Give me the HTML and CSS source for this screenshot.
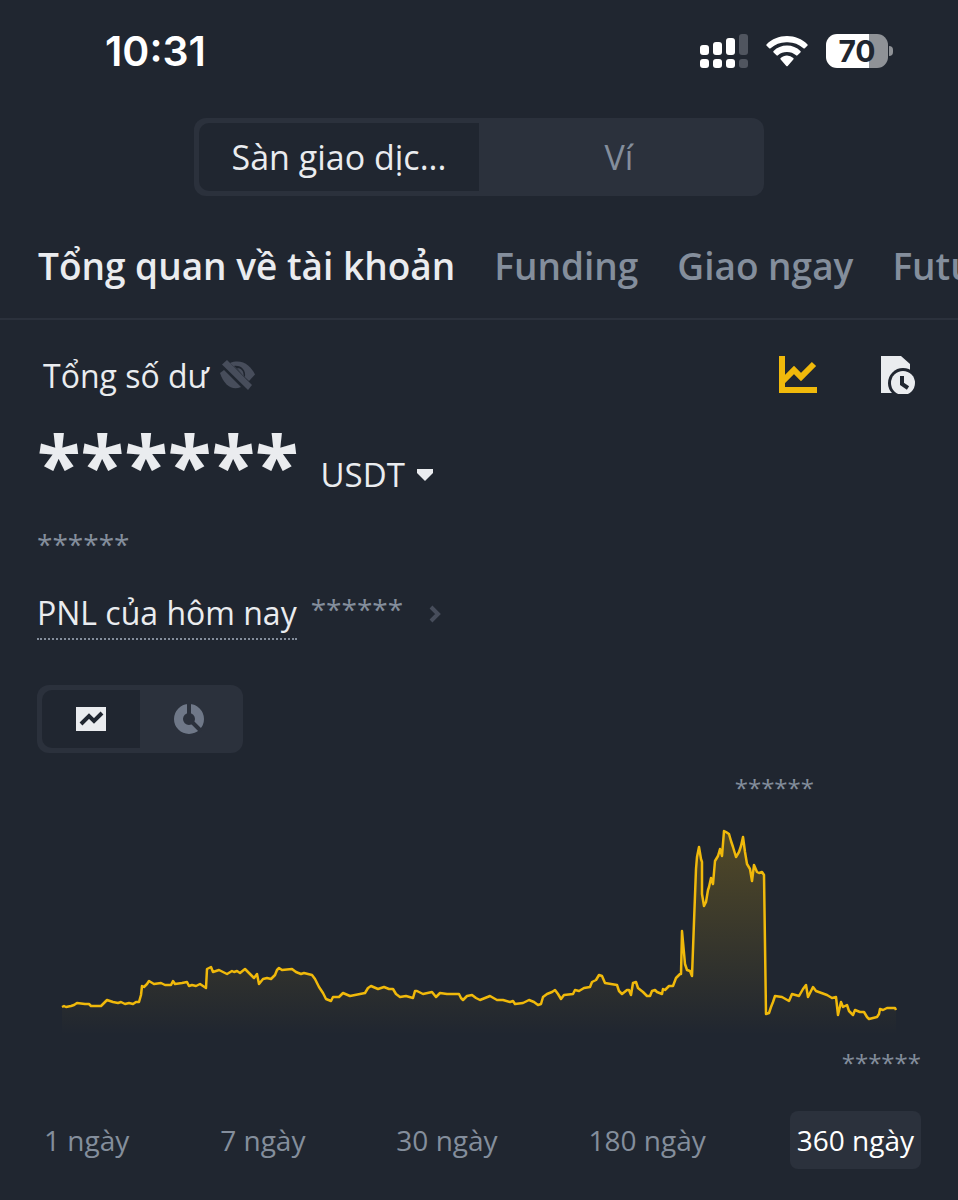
FILE: index.html
```
<!DOCTYPE html>
<html lang="vi">
  <head>
    <meta charset="UTF-8" />
    <meta name="viewport" content="width=device-width, initial-scale=1.0" />
    <title>Tổng quan về tài khoản</title>
    <link rel="stylesheet" href="styles.css">
  </head>
  <body>
    <div class="status-bar">
      <span class="time">10:31</span>
      <div class="status-icons">
        <svg class="signal" width="48" height="34" viewBox="0 0 48 34">
          <g fill="#fff">
            <rect x="0" y="11" width="9" height="10" rx="3" />
            <rect x="13" y="8" width="9" height="13" rx="3" />
            <rect x="26" y="4" width="9" height="17" rx="3" />
            <rect x="0" y="25" width="9" height="9" rx="3" />
            <rect x="13" y="25" width="9" height="9" rx="3" />
            <rect x="26" y="25" width="9" height="9" rx="3" />
          </g>
          <g fill="#50555f">
            <rect x="39" y="0" width="9" height="21" rx="3" />
            <rect x="39" y="25" width="9" height="9" rx="3" />
          </g>
        </svg>
        <svg class="wifi" width="42" height="31" viewBox="0 0 42 31" fill="#fff">
          <path d="M21 0C13 0 6 3 .7 8.200a1 1 0 0 0 0 1.500l2.500 2.500a1 1 0 0 0 1.400 0A23.500 23.500 0 0 1 21 6.200a23.500 23.500 0 0 1 16.400 6 1 1 0 0 0 1.400 0l2.500-2.500a1 1 0 0 0 0-1.500C36 3 29 0 21 0z" />
          <path d="M21 9.500c-5.200 0-9.900 2-13.400 5.400a1 1 0 0 0 0 1.500l2.900 2.900a1 1 0 0 0 1.400 0A13.800 13.800 0 0 1 21 16c3.600 0 6.600 1.200 9.100 3.300a1 1 0 0 0 1.400 0l2.900-2.900a1 1 0 0 0 0-1.500A19.800 19.800 0 0 0 21 9.500z" />
          <path d="M21 19.500c-2.400 0-4.600.9-6.300 2.500a1 1 0 0 0 0 1.500l5.600 6.500a1 1 0 0 0 1.400 0l5.600-6.500a1 1 0 0 0 0-1.500 10 10 0 0 0-6.300-2.500z" />
        </svg>
        <div class="battery"><span>70</span></div>
      </div>
    </div>

    <div class="switch">
      <button class="switch-item active" type="button">Sàn giao dịc...</button>
      <button class="switch-item" type="button">Ví</button>
    </div>

    <nav class="tabs">
      <a class="active" href="#">Tổng quan về tài khoản</a>
      <a href="#">Funding</a>
      <a href="#">Giao ngay</a>
      <a href="#">Futures</a>
    </nav>

    <main>
      <section class="balance">
        <div class="balance-head">
          <h1>Tổng số dư</h1>
          <button class="icon-btn eye" type="button" aria-label="Hiện số dư">
            <svg width="36" height="30" viewBox="0 0 36 30" fill="#474d5b">
              <path d="M10 3C22-2 31 6 35 14.500L29 21z" />
              <path d="M14 6C21 5 26 10 25 17z" fill="#202630" />
              <path d="M17 8C21 8 24 11 23.500 16z" />
              <path d="M7 0 32 25 28 30 2 4.500z" />
              <path d="M4 10 21 27C12 31 4 25 0 13z" />
            </svg>
          </button>
          <div class="balance-actions">
            <button class="icon-btn" type="button" aria-label="Biểu đồ">
              <svg width="38" height="38" viewBox="0 0 38 38">
                <path d="M0 0h6v31h32v6H0z" fill="#f0b90b" />
                <path d="M4 25 15 14l7 7L35 8" fill="none" stroke="#f0b90b" stroke-width="6" />
              </svg>
            </button>
            <button class="icon-btn" type="button" aria-label="Lịch sử">
              <svg width="34" height="38" viewBox="0 0 34 38">
                <path d="M0 0h20l9 8v29H0z" fill="#eaecef" />
                <circle cx="22" cy="27" r="15" fill="#202630" />
                <circle cx="22" cy="27" r="12" fill="#eaecef" />
                <path d="M21 20v8l6 4" fill="none" stroke="#202630" stroke-width="4" />
              </svg>
            </button>
          </div>
        </div>

        <div class="total">
          <span class="total-value">******</span>
          <button class="currency" type="button">
            USDT
            <svg width="16" height="12" viewBox="0 0 16 12"><path d="M0 0h16v4l-8 8-8-8z" fill="#eaecef" /></svg>
          </button>
        </div>
        <p class="masked">******</p>
        <div class="pnl">
          <a href="#">PNL của hôm nay</a>
          <span class="masked">******</span>
          <svg width="13" height="18" viewBox="0 0 13 18"><path d="M2 2l7 7-7 7" fill="none" stroke="#474d5b" stroke-width="4" /></svg>
        </div>
      </section>

      <div class="switch chart-switch">
        <button class="switch-item active" type="button" aria-label="Đường">
          <svg width="30" height="24" viewBox="0 0 30 24">
            <path d="M0 0h30v24H0z" fill="#eaecef" />
            <path d="M5 17l8-8 5 5 8-8" fill="none" stroke="#202630" stroke-width="4" />
          </svg>
        </button>
        <button class="switch-item" type="button" aria-label="Phân bổ">
          <svg width="30" height="30" viewBox="0 0 30 30">
            <circle cx="15" cy="15" r="10.500" fill="none" stroke="#6f7888" stroke-width="9" />
            <path d="M15 15V0M15 15l12 12" stroke="#2b313c" stroke-width="4" />
          </svg>
        </button>
      </div>

      <section class="chart">
        <p class="chart-max">******</p>
        <svg class="chart-line" viewBox="58 824 842 220">
          <defs>
            <linearGradient id="fade" gradientUnits="userSpaceOnUse" x1="0" y1="830" x2="0" y2="1036">
              <stop offset="0" stop-color="#f0b90b" stop-opacity="0.240" />
              <stop offset="1" stop-color="#f0b90b" stop-opacity="0" />
            </linearGradient>
          </defs>
          <path id="area" fill="url(#fade)" />
          <polyline id="line" fill="none" stroke="#f0b90b" stroke-width="2.500" stroke-linejoin="round"
            points="62,1008 64,1007 66,1008 71,1007 74,1006 77,1004 85,1005 89,1005 91,1007 101,1007 107,1001 113,1003 118,1004 121,1003 125,1005 129,1004 133,1005 136,1003 139,1003 141,996 142,987 144,988 147,985 149,982 154,985 161,984 165,986 171,986 173,982 175,985 182,984 187,983 189,987 192,986 196,987 200,985 203,987 206,989 207,970 211,968 213,973 219,971 227,975 232,972 234,973 237,972 240,974 245,970 250,975 254,979 257,975 259,985 263,980 267,979 271,980 275,976 277,971 279,969 282,971 292,970 296,973 301,975 304,974 312,976 315,980 319,988 323,994 326,1000 331,1002 333,998 339,998 343,994 350,997 365,994 368,989 371,987 378,990 384,988 389,990 393,990 396,995 400,998 406,997 413,999 415,992 417,992 423,995 432,993 436,998 440,994 447,995 459,995 461,999 463,1001 467,997 472,996 476,999 480,1001 485,999 490,997 497,1001 503,1001 510,1003 513,1002 515,1005 523,1004 529,1001 534,1003 538,1006 541,1005 543,998 547,995 552,993 555,991 558,995 561,1000 564,996 573,995 575,991 579,992 584,989 590,988 592,983 596,981 599,976 602,977 605,984 611,985 617,986 619,992 622,995 627,991 629,991 631,996 633,984 636,983 638,989 643,993 647,997 650,997 652,992 655,991 657,993 662,995 663,990 665,991 669,987 673,987 676,979 680,975 681,975 682,932 685,965 687,971 690,972 692,977 694,923 696,870 697,858 699,848 701,860 702,863 702,895 704,907 706,903 708,891 709,888 711,879 713,885 715,862 718,857 720,850 722,857 724,832 726,833 729,835 731,842 733,848 736,858 739,853 741,847 743,838 745,853 747,865 750,870 752,882 754,866 757,873 759,874 762,873 764,876 766,1015 769,1014 771,1008 773,1003 775,997 782,998 789,1002 792,995 799,997 803,990 806,986 808,998 813,988 816,992 827,996 832,999 836,998 838,1016 841,1003 843,1008 847,1006 849,1012 853,1016 855,1011 860,1013 864,1013 867,1018 869,1020 877,1018 879,1015 880,1010 883,1011 887,1009 895,1009 896,1011" />
        </svg>
        <p class="chart-min">******</p>
      </section>

      <div class="ranges">
        <button type="button">1 ngày</button>
        <button type="button">7 ngày</button>
        <button type="button">30 ngày</button>
        <button type="button">180 ngày</button>
        <button class="active" type="button">360 ngày</button>
      </div>
    </main>
    <script>
      // close the line down to the baseline to get the shaded area
      var points = document.getElementById("line").getAttribute("points");
      document
        .getElementById("area")
        .setAttribute("d", "M62 1036 L" + points + " L896 1036 Z");
    </script>
  </body>
</html>
```
FILE: styles.css
```
* {
  margin: 0;
  padding: 0;
  box-sizing: border-box;
}
body {
  background: #202630;
  color: #eaecef;
  font-family: "Open Sans", "Noto Sans", sans-serif;
  overflow-x: hidden;
}
button {
  border: 0;
  background: none;
  color: inherit;
  font: inherit;
  cursor: pointer;
}
a {
  color: inherit;
  text-decoration: none;
}
svg {
  display: block;
}

.status-bar {
  display: flex;
  justify-content: space-between;
  align-items: center;
  height: 102px;
  padding: 0 70px 0 105px;
  color: #fff;
  font-family: Inter, sans-serif;
}
.time {
  font-size: 41px;
  font-weight: 600;
}
.status-icons {
  display: flex;
  align-items: center;
  gap: 18px;
}
.battery {
  position: relative;
  width: 62px;
  height: 34px;
  border-radius: 11px;
  background: linear-gradient(to right, #fff 70%, #8f9297 70%);
  color: #202630;
  font-size: 30px;
  font-weight: 700;
  line-height: 34px;
  text-align: center;
}
.battery::after {
  content: "";
  position: absolute;
  right: -5px;
  top: 12px;
  width: 4px;
  height: 10px;
  border-radius: 0 4px 4px 0;
  background: #8f9297;
}

.switch {
  display: flex;
  width: 60%;
  max-width: 570px;
  height: 78px;
  margin: 16px auto 0;
  padding: 5px;
  border-radius: 12px;
  background: #2b313c;
}
.switch-item {
  flex: 1;
  display: flex;
  justify-content: center;
  align-items: center;
  color: #848e9c;
  font-size: 34px;
}
.switch-item.active {
  border-radius: 10px 0 0 10px;
  background: #202630;
  color: #eaecef;
  font-weight: 500;
}

.tabs {
  display: flex;
  gap: 39px;
  height: 124px;
  padding: 0 0 0 38px;
  border-bottom: 2px solid #2b313c;
  color: #848e9c;
  font-size: 37px;
  font-weight: 600;
  line-height: 140px;
  white-space: nowrap;
  overflow: hidden;
}
.tabs .active {
  color: #eaecef;
}

main {
  padding: 0 37px 28px;
}
.balance-head {
  display: flex;
  align-items: center;
  gap: 11px;
  height: 110px;
  padding: 0 6px;
}
h1 {
  font-size: 32px;
  font-weight: 400;
}
.balance-actions {
  display: flex;
  gap: 64px;
  margin-left: auto;
}
.total {
  display: flex;
  align-items: flex-end;
  gap: 22px;
  height: 68px;
}
.total-value {
  font-size: 80px;
  font-weight: 700;
  line-height: 70px;
}
.currency {
  display: flex;
  align-items: center;
  gap: 12px;
  font-size: 33px;
  font-weight: 500;
  line-height: 46px;
}
.masked {
  color: #848e9c;
  font-size: 28px;
}
p.masked {
  height: 40px;
  margin-top: 26px;
  line-height: 40px;
}
.pnl {
  display: flex;
  align-items: center;
  gap: 14px;
  height: 50px;
  margin-top: 25px;
}
.pnl a {
  border-bottom: 2px dotted #848e9c;
  font-size: 32px;
  line-height: 50px;
}
.pnl .masked {
  align-self: flex-start;
  line-height: 40px;
}
.pnl svg {
  margin-left: 12px;
}

.chart-switch {
  width: 206px;
  height: 68px;
  margin: 46px 0 0;
}

.chart-max,
.chart-min {
  color: #848e9c;
  font-size: 24px;
  line-height: 40px;
  text-align: right;
}
.chart-max {
  margin: 15px 107px 0 0;
}
.chart-line {
  width: calc(100% - 42px);
  margin: 15px 0 0 21px;
}

.ranges {
  display: flex;
  justify-content: space-between;
  margin-top: 28px;
  color: #848e9c;
  font-size: 28px;
}
.ranges button {
  height: 58px;
  padding: 0 7px;
  border-radius: 8px;
}
.ranges .active {
  background: #2b313c;
  color: #fff;
  font-weight: 500;
}
```
